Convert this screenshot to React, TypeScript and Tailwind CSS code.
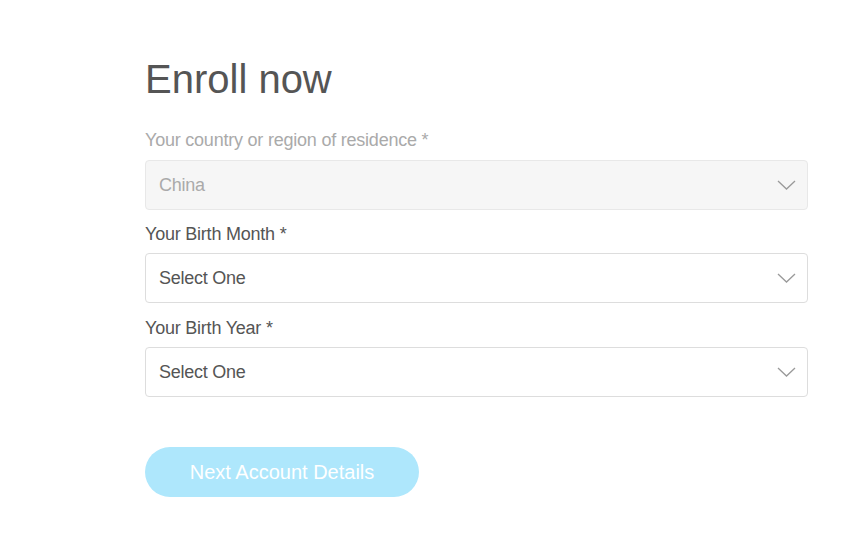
import React from 'react';

const Chevron = () => (
  <svg width="19" height="10" viewBox="0 0 19 10" fill="none" className="shrink-0">
    <path d="M1 1l8.5 8L18 1" stroke="#9a9a9a" strokeWidth="1.3" />
  </svg>
);

interface SelectBoxProps {
  value: string;
  disabled?: boolean;
}

const SelectBox: React.FC<SelectBoxProps> = ({ value, disabled }) => (
  <div
    className={`h-[50px] w-full rounded-[4px] border flex items-center justify-between pl-[13px] pr-[11px] ${
      disabled ? 'bg-[#f6f6f6] border-[#e8e8e8] text-[#aaaaaa]' : 'bg-white border-[#dddddd] text-[#555555]'
    }`}
  >
    <span className="text-[18px] leading-[24px] tracking-[-0.25px]">{value}</span>
    <Chevron />
  </div>
);

export default function App() {
  return (
    <div className="w-[863px] h-[541px] bg-white font-['Liberation_Sans',Arial,sans-serif] overflow-hidden">
      <div className="ml-[145px] w-[663px] pt-[55px]">
        <h1 className="text-[40px] leading-[48px] text-[#555555] font-normal">Enroll now</h1>

        <label className="block mt-[25px] mb-[8px] text-[18px] leading-[24px] tracking-[-0.22px] text-[#aaaaaa]">
          Your country or region of residence *
        </label>
        <SelectBox value="China" disabled />

        <label className="block mt-[12px] mb-[7px] text-[18px] leading-[24px] tracking-[-0.22px] text-[#555555]">
          Your Birth Month *
        </label>
        <SelectBox value="Select One" />

        <label className="block mt-[13px] mb-[7px] text-[18px] leading-[24px] tracking-[-0.22px] text-[#555555]">
          Your Birth Year *
        </label>
        <SelectBox value="Select One" />

        <button
          type="button"
          className="mt-[50px] h-[50px] w-[274px] rounded-full bg-[#aee7fc] text-white text-[20px] leading-[24px] flex items-center justify-center"
        >
          Next Account Details
        </button>
      </div>
    </div>
  );
}
